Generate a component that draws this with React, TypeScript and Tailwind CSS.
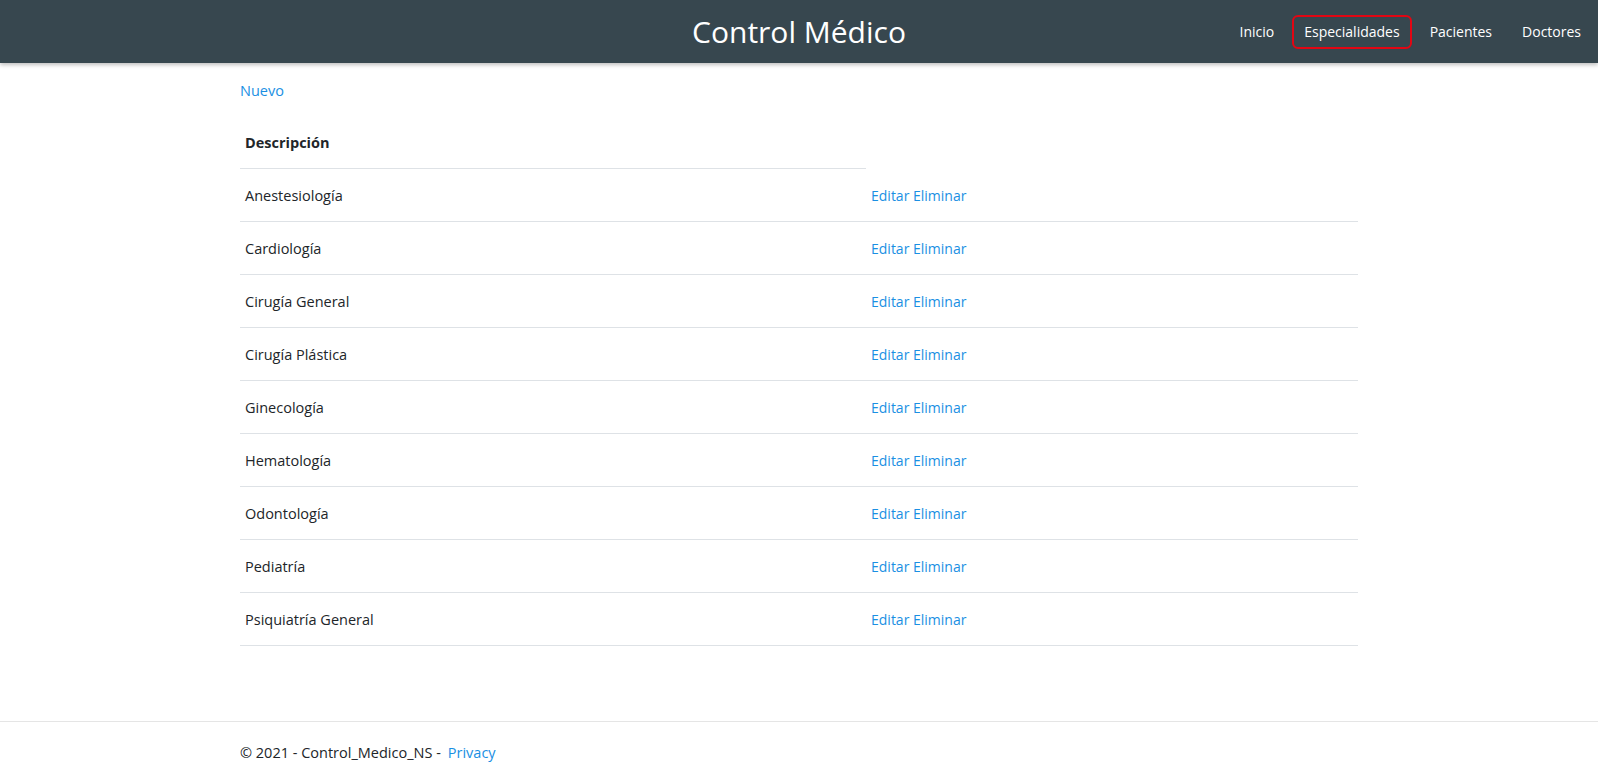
const especialidades = [
  'Anestesiología',
  'Cardiología',
  'Cirugía General',
  'Cirugía Plástica',
  'Ginecología',
  'Hematología',
  'Odontología',
  'Pediatría',
  'Psiquiatría General',
];

const navLinks = ['Inicio', 'Especialidades', 'Pacientes', 'Doctores'];

export default function App() {
  return (
    <div className="min-h-[782px] flex flex-col bg-white text-[#212529] font-['Open_Sans',sans-serif] text-[14.5px]">
      <header className="relative h-[63px] bg-[#37474f] shadow-[0_2px_4px_rgba(0,0,0,0.25)] flex items-center">
        <h1 className="absolute left-1/2 -translate-x-1/2 text-white text-[30px] leading-none">
          Control Médico
        </h1>
        <nav className="ml-auto flex items-center gap-[6px] pr-[5px] text-[14px]">
          {navLinks.map((link) => (
            <a
              key={link}
              href="#"
              className={
                link === 'Especialidades'
                  ? 'h-[34px] flex items-center px-[10px] border-2 border-[#e30613] rounded-md text-white'
                  : 'h-[34px] flex items-center px-[12px] text-white'
              }
            >
              {link}
            </a>
          ))}
        </nav>
      </header>

      <main className="w-[1118px] mx-auto pt-[16px] flex-1">
        <a href="#" className="block leading-6 text-[#1a8fe3]">
          Nuevo
        </a>

        <table className="mt-[12px] w-full border-collapse">
          <thead>
            <tr className="h-[53px]">
              <th className="w-[626px] px-[5px] pt-[3px] text-left font-bold border-b border-[#dee2e6]">
                Descripción
              </th>
            </tr>
          </thead>
          <tbody>
            {especialidades.map((esp) => (
              <tr key={esp} className="h-[53px] border-b border-[#dee2e6]">
                <td className="px-[5px] pt-[2px]">{esp}</td>
                <td className="px-[5px] pt-[2px] text-[#1a8fe3] text-[14px]">
                  <a href="#">Editar</a> <a href="#">Eliminar</a>
                </td>
              </tr>
            ))}
          </tbody>
        </table>
      </main>

      <footer className="h-[61px] border-t border-[#e5e5e5]">
        <div className="w-[1118px] mx-auto h-full flex items-center pt-[2px]">
          © 2021 - Control_Medico_NS -<a href="#" className="ml-[7px] text-[#1a8fe3]">Privacy</a>
        </div>
      </footer>
    </div>
  );
}
